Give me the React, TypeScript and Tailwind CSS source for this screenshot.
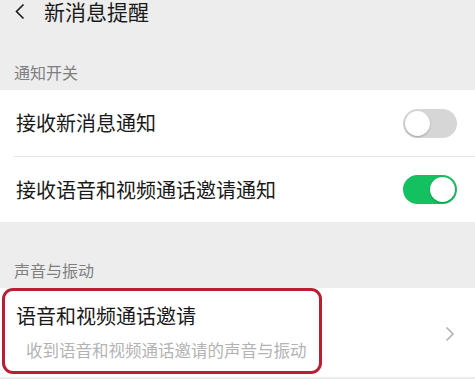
import React from "react";

const font = { fontFamily: '"Noto Sans CJK SC", "Noto Sans", sans-serif' };

function Toggle({ on }: { on: boolean }) {
  return (
    <div
      className={
        "relative h-[29px] w-[54px] rounded-full " +
        (on ? "bg-[#13c160]" : "bg-[#d6d6d6]")
      }
    >
      <div
        className={
          "absolute top-[2px] h-[25px] w-[25px] rounded-full bg-white shadow-[0_1px_2px_rgba(0,0,0,0.25)] " +
          (on ? "right-[2px]" : "left-[2px]")
        }
      />
    </div>
  );
}

export default function App() {
  return (
    <div className="w-[475px] h-[379px] overflow-hidden bg-[#ededed] text-[#1a1a1a]" style={font}>
      <div className="relative h-[33px] flex items-start">
        <svg className="absolute left-[14px] top-[3px]" width="12" height="17" viewBox="0 0 12 17">
          <path d="M9.5 1.5 L2.5 8.5 L9.5 15.5" stroke="#1a1a1a" strokeWidth="1.6" fill="none" />
        </svg>
        <div className="absolute left-[44px] top-[-2px] text-[21px] leading-[26px]">新消息提醒</div>
      </div>
      <div className="h-[57px] flex items-end pl-[14px] pb-[9px] text-[16px] leading-[18px] text-[#7f7f7f]">
        通知开关
      </div>
      <div className="bg-white">
        <div className="h-[66px] flex items-center justify-between pl-[16px] pr-[18px] text-[20px]">
          <span>接收新消息通知</span>
          <Toggle on={false} />
        </div>
        <div className="ml-[14px] h-px bg-[#e6e6e6]" />
        <div className="h-[65px] flex items-center justify-between pl-[16px] pr-[18px] text-[20px]">
          <span>接收语音和视频通话邀请通知</span>
          <Toggle on={true} />
        </div>
      </div>
      <div className="h-[66px] flex items-end pl-[14px] pb-[9px] text-[16px] leading-[18px] text-[#7f7f7f]">
        声音与振动
      </div>
      <div className="relative h-[89px] bg-white flex items-center justify-between pr-[18px]">
        <div className="flex flex-col pl-[16px]">
          <span className="text-[20px] leading-[26px] mt-[-2px]">语音和视频通话邀请</span>
          <span className="text-[16.5px] leading-[20px] mt-[11px] pl-[10px] text-[#b3b3b3]">
            收到语音和视频通话邀请的声音与振动
          </span>
        </div>
        <svg width="10" height="16" viewBox="0 0 10 16" className="mt-[2px] mr-[2px]">
          <path d="M1.5 1.5 L8 8 L1.5 14.5" stroke="#b0b0b0" strokeWidth="1.5" fill="none" />
        </svg>
        <div className="absolute left-[2px] top-0 w-[320px] h-[86px] rounded-[11px] border-[3px] border-[#bb1e32]" />
      </div>
    </div>
  );
}
